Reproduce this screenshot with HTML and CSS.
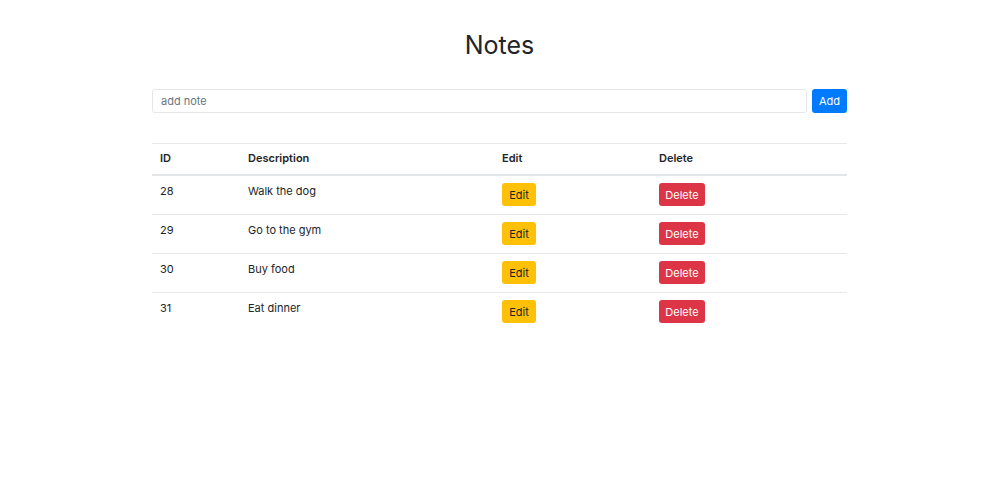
FILE: index.html
```html
<!DOCTYPE html>
<html>
<head>
<meta charset="utf-8">
<link rel="stylesheet" href="styles.css">
</head>
<body>
<div class="container">
  <h1 class="title">Notes</h1>
  <form class="add-form">
    <input class="note-input" type="text" placeholder="add note">
    <button class="btn btn-primary" type="button">Add</button>
  </form>
  <table class="notes-table">
    <thead>
      <tr><th class="c-id">ID</th><th class="c-desc">Description</th><th class="c-edit">Edit</th><th class="c-del">Delete</th></tr>
    </thead>
    <tbody>
      <tr><td>28</td><td>Walk the dog</td><td><button class="btn btn-warning">Edit</button></td><td><button class="btn btn-danger">Delete</button></td></tr>
      <tr><td>29</td><td>Go to the gym</td><td><button class="btn btn-warning">Edit</button></td><td><button class="btn btn-danger">Delete</button></td></tr>
      <tr><td>30</td><td>Buy food</td><td><button class="btn btn-warning">Edit</button></td><td><button class="btn btn-danger">Delete</button></td></tr>
      <tr><td>31</td><td>Eat dinner</td><td><button class="btn btn-warning">Edit</button></td><td><button class="btn btn-danger">Delete</button></td></tr>
    </tbody>
  </table>
</div>
</body>
</html>
```
FILE: styles.css
```css
html, body {
  margin: 0;
  padding: 0;
  background: #fff;
}
body {
  font-family: Inter, "Liberation Sans", sans-serif;
  font-size: 11px;
  color: #212529;
}
.container {
  width: 695px;
  margin: 0 0 0 152px;
}
.title {
  margin: 0;
  padding-top: 29px;
  text-align: center;
  font-size: 25px;
  font-weight: 400;
  line-height: 32px;
  height: 60px;
}
.add-form {
  display: flex;
  gap: 5px;
  height: 24px;
  margin: 0;
}
.note-input {
  flex: 1;
  box-sizing: border-box;
  height: 24px;
  border: 1px solid #e4e7ea;
  border-radius: 3px;
  padding: 0 8px;
  font-family: inherit;
  font-size: 11px;
  color: #495057;
  outline: none;
}
.note-input::placeholder {
  color: #6c757d;
}
.btn {
  box-sizing: border-box;
  border: 1px solid transparent;
  border-radius: 3px;
  font-family: inherit;
  font-size: 11px;
  line-height: 16px;
  padding: 0;
  cursor: pointer;
}
.btn-primary {
  background: #007bff;
  color: #fff;
  height: 24px;
  width: 35px;
}
.btn-warning {
  background: #ffc107;
  color: #212529;
  height: 23px;
  width: 34px;
}
.btn-danger {
  background: #dc3545;
  color: #fff;
  height: 23px;
  width: 46px;
}
.notes-table {
  width: 100%;
  margin-top: 30px;
  border-collapse: collapse;
}
.notes-table th,
.notes-table td {
  text-align: left;
  vertical-align: top;
  padding: 8px;
  border-top: 1px solid #e6e8eb;
  line-height: 15px;
}
.notes-table th {
  font-weight: 600;
  padding-top: 7px;
  padding-bottom: 8px;
  border-bottom: 2px solid #e3e6e9;
}
.notes-table td {
  padding-top: 8px;
  padding-bottom: 7px;
}
.notes-table td .btn {
  margin-top: -1px;
  margin-bottom: 1px;
}
.c-id { width: 72px; }
.c-desc { width: 238px; }
.c-edit { width: 141px; }
```
